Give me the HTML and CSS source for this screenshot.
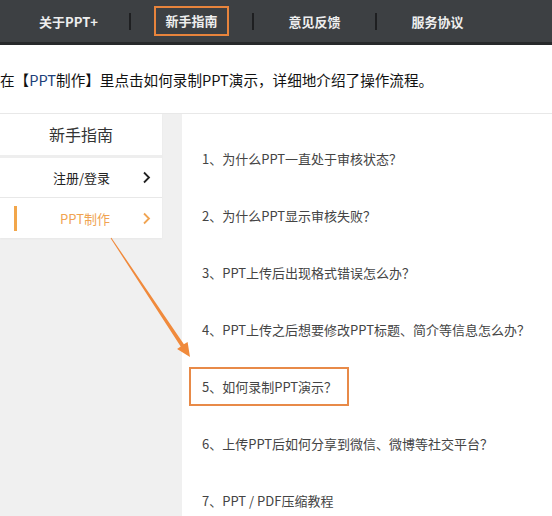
FILE: index.html
```html
<!DOCTYPE html>
<html lang="zh-CN">
<head>
    <meta charset="UTF-8">
    <meta name="viewport" content="width=device-width, initial-scale=1">
    <title>新手指南</title>
    <link rel="stylesheet" href="styles.css">
</head>
<body>
    <div class="topbar">
        <a class="nav-item">关于PPT+</a>
        <span class="nav-sep"></span>
        <a class="nav-item"><span class="nav-mark">新手指南</span></a>
        <span class="nav-sep"></span>
        <a class="nav-item">意见反馈</a>
        <span class="nav-sep"></span>
        <a class="nav-item">服务协议</a>
    </div>
    <p class="intro">在【<span class="hl">PPT</span>制作】里点击如何录制PPT演示，详细地介绍了操作流程。</p>
    <div class="main">
        <div class="sidebar">
            <div class="side-title">新手指南</div>
            <div class="side-row">
                <span class="side-text">注册/登录</span>
                <svg class="chev" width="9" height="13" viewBox="0 0 9 13"><polyline points="2,1.5 7,6.5 2,11.5" fill="none" stroke="currentColor" stroke-width="1.8"/></svg>
            </div>
            <div class="side-row active">
                <span class="side-bar"></span>
                <span class="side-text">PPT制作</span>
                <svg class="chev" width="9" height="13" viewBox="0 0 9 13"><polyline points="2,1.5 7,6.5 2,11.5" fill="none" stroke="currentColor" stroke-width="1.8"/></svg>
            </div>
        </div>
        <ul class="faq">
            <li><span>1、为什么PPT一直处于审核状态？</span></li>
            <li><span>2、为什么PPT显示审核失败？</span></li>
            <li><span>3、PPT上传后出现格式错误怎么办？</span></li>
            <li><span>4、PPT上传之后想要修改PPT标题、简介等信息怎么办？</span></li>
            <li><span class="boxed">5、如何录制PPT演示？</span></li>
            <li><span>6、上传PPT后如何分享到微信、微博等社交平台？</span></li>
            <li><span>7、PPT / PDF压缩教程</span></li>
        </ul>
    </div>
    <svg class="arrow" width="552" height="516" viewBox="0 0 552 516">
        <polygon points="110.6,238.3 111.4,237.7 183.9,344.3 187.6,341.9 190,357 177.1,348.9 180.7,346.5" fill="#f08a3c"/>
    </svg>
</body>
</html>
```

FILE: styles.css
```css
body {
    margin: 0;
    font-family: "Noto Sans CJK SC", "Noto Sans", sans-serif;
    background: #fff;
    color: #333;
    width: 552px;
    height: 516px;
    overflow: hidden;
    position: relative;
}
.topbar {
    display: flex;
    align-items: center;
    height: 42px;
    padding-left: 8px;
    background: #3d4043;
    border-bottom: 3px solid #27292b;
}
.nav-item {
    width: 121px;
    text-align: center;
    color: #eee;
    font-size: 13px;
    font-weight: bold;
}
.nav-mark {
    display: inline-block;
    padding: 4px 9px;
    line-height: 18px;
    border: 2px solid #e8843c;
}
.nav-sep {
    width: 2px;
    height: 17px;
    background: #1e1f21;
}
.intro {
    margin: 0;
    height: 68px;
    line-height: 70px;
    font-size: 14.6px;
    color: #111;
    white-space: nowrap;
    border-bottom: 1px solid #e8e8e8;
}
.intro .hl {
    color: #1d3f7a;
}
.main {
    display: flex;
    gap: 20px;
    height: 402px;
    background: #f0f0f0;
}
.sidebar {
    width: 162px;
    align-self: flex-start;
    background: #fff;
    box-shadow: 0 1px 2px rgba(0, 0, 0, 0.04);
}
.side-title {
    height: 41px;
    line-height: 41px;
    text-align: center;
    font-size: 16px;
    color: #333;
    border-bottom: 3px solid #eee;
}
.side-row {
    display: flex;
    align-items: center;
    height: 39px;
    padding: 0 11px 0 14px;
    font-size: 13px;
    color: #222;
}
.side-row + .side-row {
    border-top: 1px solid #e8e8e8;
    height: 40px;
}
.side-text {
    margin-left: auto;
}
.chev {
    margin-left: 32px;
}
.side-row.active {
    color: #f0a452;
}
.side-bar {
    width: 3px;
    height: 25px;
    background: #f2a64a;
}
.faq {
    flex: 1;
    list-style: none;
    margin: 0;
    padding: 16px 0 0 7px;
    background: #fff;
}
.faq li {
    height: 57px;
    display: flex;
    align-items: center;
    font-size: 13px;
    color: #444;
}
.faq li span {
    padding: 8px 10px 8px 11px;
    border: 2px solid transparent;
    white-space: nowrap;
}
.faq li .boxed {
    border-color: #e88a48;
}
.arrow {
    position: absolute;
    left: 0;
    top: 0;
    pointer-events: none;
}
```
